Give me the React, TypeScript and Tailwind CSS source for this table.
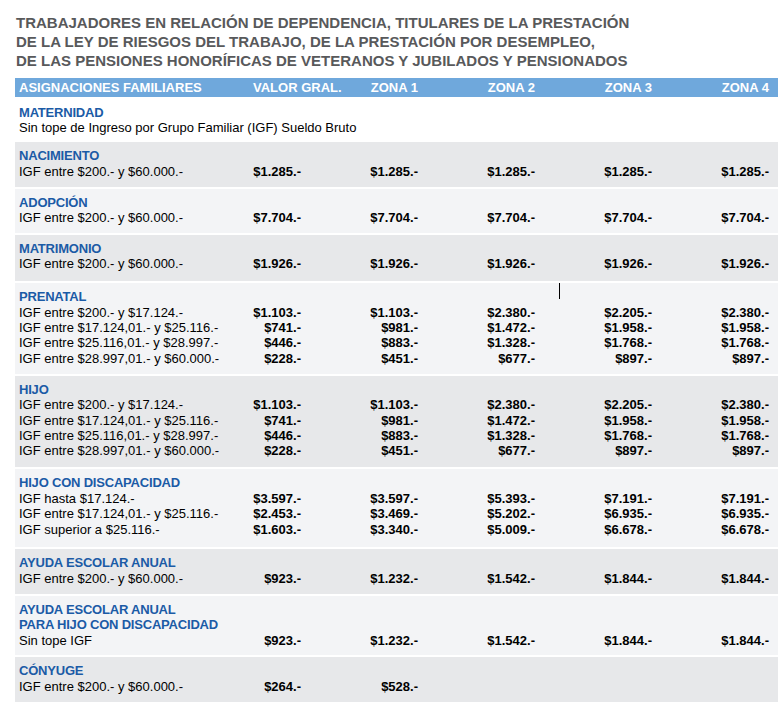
import React from "react";

type Line = { label: string; values: string[] };
type Section = { title: string[]; lines: Line[]; tone: "white" | "gray" | "light"; pad: string };

const ALL = (v: string) => [v, v, v, v, v];

const prenatal: Line[] = [
  { label: "IGF entre $200.- y $17.124.-", values: ["$1.103.-", "$1.103.-", "$2.380.-", "$2.205.-", "$2.380.-"] },
  { label: "IGF entre $17.124,01.- y $25.116.-", values: ["$741.-", "$981.-", "$1.472.-", "$1.958.-", "$1.958.-"] },
  { label: "IGF entre $25.116,01.- y $28.997.-", values: ["$446.-", "$883.-", "$1.328.-", "$1.768.-", "$1.768.-"] },
  { label: "IGF entre $28.997,01.- y $60.000.-", values: ["$228.-", "$451.-", "$677.-", "$897.-", "$897.-"] },
];

const sections: Section[] = [
  { title: ["MATERNIDAD"], tone: "white", pad: "pb-[4.5px]", lines: [{ label: "Sin tope de Ingreso por Grupo Familiar (IGF) Sueldo Bruto", values: [] }] },
  { title: ["NACIMIENTO"], tone: "gray", pad: "pb-[7.5px]", lines: [{ label: "IGF entre $200.- y $60.000.-", values: ALL("$1.285.-") }] },
  { title: ["ADOPCIÓN"], tone: "light", pad: "pb-[7.5px]", lines: [{ label: "IGF entre $200.- y $60.000.-", values: ALL("$7.704.-") }] },
  { title: ["MATRIMONIO"], tone: "gray", pad: "pb-[9.5px]", lines: [{ label: "IGF entre $200.- y $60.000.-", values: ALL("$1.926.-") }] },
  { title: ["PRENATAL"], tone: "light", pad: "pb-[7.5px]", lines: prenatal },
  { title: ["HIJO"], tone: "gray", pad: "pb-[8.5px]", lines: prenatal },
  {
    title: ["HIJO CON DISCAPACIDAD"],
    tone: "light",
    pad: "pb-[10.5px]",
    lines: [
      { label: "IGF hasta $17.124.-", values: ["$3.597.-", "$3.597.-", "$5.393.-", "$7.191.-", "$7.191.-"] },
      { label: "IGF entre $17.124,01.- y $25.116.-", values: ["$2.453.-", "$3.469.-", "$5.202.-", "$6.935.-", "$6.935.-"] },
      { label: "IGF superior a $25.116.-", values: ["$1.603.-", "$3.340.-", "$5.009.-", "$6.678.-", "$6.678.-"] },
    ],
  },
  {
    title: ["AYUDA ESCOLAR ANUAL"],
    tone: "gray",
    pad: "pb-[7.5px]",
    lines: [{ label: "IGF entre $200.- y $60.000.-", values: ["$923.-", "$1.232.-", "$1.542.-", "$1.844.-", "$1.844.-"] }],
  },
  {
    title: ["AYUDA ESCOLAR ANUAL", "PARA HIJO CON DISCAPACIDAD"],
    tone: "light",
    pad: "pb-[7.5px]",
    lines: [{ label: "Sin tope IGF", values: ["$923.-", "$1.232.-", "$1.542.-", "$1.844.-", "$1.844.-"] }],
  },
  { title: ["CÓNYUGE"], tone: "gray", pad: "pb-[7.5px]", lines: [{ label: "IGF entre $200.- y $60.000.-", values: ["$264.-", "$528.-"] }] },
];

const grid = "grid grid-cols-[234px_48px_117px_117px_117px_117px]";

const toneClass = {
  white: "bg-white",
  gray: "bg-[#e7e8ea]",
  light: "bg-[#f3f4f6]",
};

export default function App() {
  return (
    <div className="relative w-[778px] h-[702px] overflow-hidden bg-white font-['Liberation_Sans',Arial,sans-serif]">
      {/* Title */}
      <h1 className="pl-[16px] pt-[13px] text-[15px] leading-[19px] font-bold text-[#58595b]">
        TRABAJADORES EN RELACIÓN DE DEPENDENCIA, TITULARES DE LA PRESTACIÓN
        <br />
        DE LA LEY DE RIESGOS DEL TRABAJO, DE LA PRESTACIÓN POR DESEMPLEO,
        <br />
        DE LAS PENSIONES HONORÍFICAS DE VETERANOS Y JUBILADOS Y PENSIONADOS
      </h1>

      {/* Table */}
      <div className="ml-[15px] mt-[8px] flex flex-col gap-[2px]">
        <div className={`${grid} h-[19px] items-center bg-[#6fa8dc] pl-[4px] text-[13px] font-bold text-white`}>
          <span>ASIGNACIONES FAMILIARES</span>
          <span className="whitespace-nowrap">VALOR GRAL.</span>
          <span className="text-right">ZONA 1</span>
          <span className="text-right">ZONA 2</span>
          <span className="text-right">ZONA 3</span>
          <span className="text-right">ZONA 4</span>
        </div>

        {sections.map((s, i) => (
          <div key={i} className={`${toneClass[s.tone]} ${s.pad} pl-[4px] pt-[6px] text-[13px] leading-[15.4px]`}>
            {s.title.map((t) => (
              <div key={t} className="font-bold tracking-[-0.2px] text-[#1b5ba6]">
                {t}
              </div>
            ))}
            {s.lines.map((l, j) => (
              <div key={j} className={`${grid} text-black`}>
                <span className="whitespace-nowrap">{l.label}</span>
                {l.values.map((v, k) => (
                  <span key={k} className="text-right font-bold whitespace-nowrap">
                    {v}
                  </span>
                ))}
              </div>
            ))}
          </div>
        ))}
        <div className="h-[10px] bg-[#f3f4f6]" />
      </div>

      {/* text caret */}
      <div className="absolute left-[559px] top-[283px] h-[16px] w-[1px] bg-black" />
    </div>
  );
}
